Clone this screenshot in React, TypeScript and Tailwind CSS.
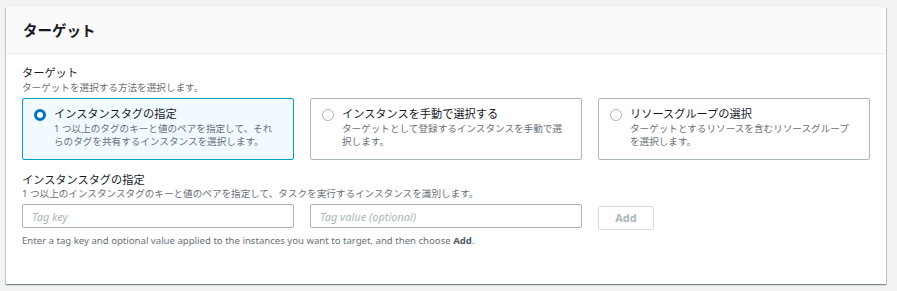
import React, { useState } from 'react';

const FONT = "font-['Noto_Sans','Noto_Sans_CJK_JP',sans-serif]";

const options = [
  {
    id: 'tags',
    title: 'インスタンスタグの指定',
    desc: '1 つ以上のタグのキーと値のペアを指定して、それらのタグを共有するインスタンスを選択します。',
  },
  {
    id: 'manual',
    title: 'インスタンスを手動で選択する',
    desc: 'ターゲットとして登録するインスタンスを手動で選択します。',
  },
  {
    id: 'group',
    title: 'リソースグループの選択',
    desc: 'ターゲットとするリソースを含むリソースグループを選択します。',
  },
];

function Radio({ checked }: { checked: boolean }) {
  return (
    <span
      className={
        checked
          ? 'mt-[2px] block h-[12px] w-[12px] shrink-0 rounded-full border-[3.5px] border-[#0073bb] bg-white'
          : 'mt-[2px] block h-[12px] w-[12px] shrink-0 rounded-full border border-[#aab7b8] bg-white'
      }
    />
  );
}

export default function App() {
  const [selected, setSelected] = useState('tags');

  return (
    <div className={`${FONT} min-h-[291px] w-full bg-[#f2f3f3] pl-[6px] pt-[7px]`}>
      <div className="flex h-[277px] w-[880px] flex-col bg-white shadow-[0_1px_1px_0_rgba(0,28,36,0.3),1px_1px_1px_0_rgba(0,28,36,0.15),-1px_1px_1px_0_rgba(0,28,36,0.15)]">
        {/* header */}
        <div className="flex h-[47px] items-center border-b border-[#eaeded] bg-[#fafafa] pl-[17px]">
          <h2 className="text-[14.5px] font-bold leading-[18px] text-[#16191f]">ターゲット</h2>
        </div>

        <div className="flex flex-col px-4 pt-[12px]">
          <div className="text-[11.2px] leading-[14px] text-[#16191f]">ターゲット</div>
          <div className="mt-[1px] text-[9.6px] leading-[13px] text-[#687078]">ターゲットを選択する方法を選択します。</div>

          <div className="mt-[4px] grid grid-cols-3 gap-4">
            {options.map((o) => {
              const on = selected === o.id;
              return (
                <button
                  key={o.id}
                  onClick={() => setSelected(o.id)}
                  className={
                    on
                      ? 'flex h-[62px] items-start gap-[8px] rounded-[2px] border border-[#00a1c9] bg-[#f1faff] pl-[11px] pr-[18px] pt-[8px] text-left'
                      : 'flex h-[62px] items-start gap-[8px] rounded-[2px] border border-[#aab7b8] bg-white pl-[11px] pr-[18px] pt-[8px] text-left'
                  }
                >
                  <Radio checked={on} />
                  <div className="flex flex-col">
                    <span className="text-[11.2px] leading-[14px] text-[#16191f]">{o.title}</span>
                    <span className="mt-[1px] text-[9.6px] leading-[13px] text-[#687078]">{o.desc}</span>
                  </div>
                </button>
              );
            })}
          </div>

          <div className="mt-[13px] text-[11.2px] leading-[14px] text-[#16191f]">インスタンスタグの指定</div>
          <div className="text-[9.6px] leading-[13px] text-[#687078]">
            1 つ以上のインスタンスタグのキーと値のペアを指定して、タスクを実行するインスタンスを識別します。
          </div>

          <div className="mt-[4px] grid grid-cols-3 gap-4">
            <input
              placeholder="Tag key"
              className="h-[24px] rounded-[2px] border border-[#aab7b8] bg-white px-[9px] text-[11px] text-[#16191f] outline-none placeholder:italic placeholder:text-[#aab7b8]"
            />
            <input
              placeholder="Tag value (optional)"
              className="h-[24px] rounded-[2px] border border-[#aab7b8] bg-white px-[9px] text-[11px] text-[#16191f] outline-none placeholder:italic placeholder:text-[#aab7b8]"
            />
            <div>
              <button
                disabled
                className="h-[24px] w-[56px] rounded-[2px] border border-[#d5dbdb] bg-white text-[11px] font-bold text-[#aab7b8]"
              >
                Add
              </button>
            </div>
          </div>

          <div className="mt-[4px] text-[9.6px] leading-[13px] text-[#687078]">
            Enter a tag key and optional value applied to the instances you want to target, and then choose{' '}
            <span className="font-bold text-[#545b64]">Add</span>.
          </div>
        </div>
      </div>
    </div>
  );
}
